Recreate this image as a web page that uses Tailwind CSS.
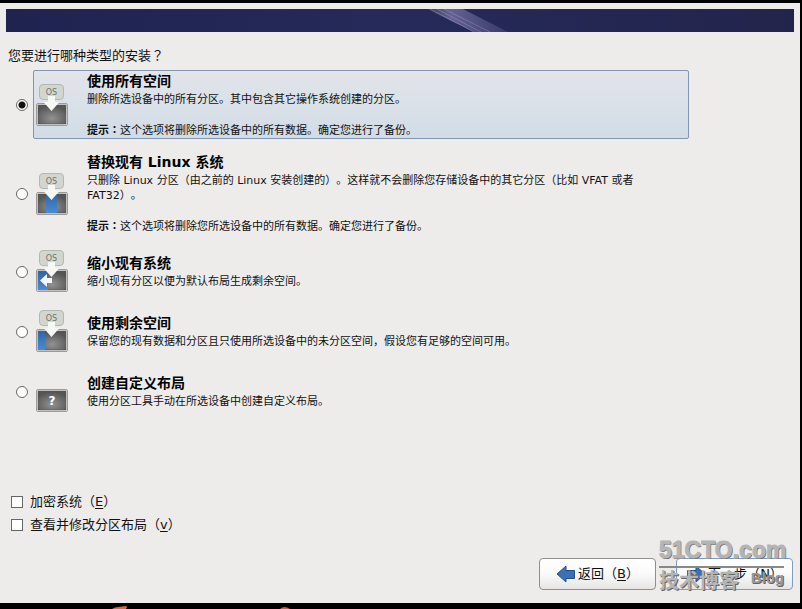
<!DOCTYPE html>
<html lang="zh-CN">
<head>
    <meta charset="UTF-8">
    <meta name="viewport" content="width=device-width, initial-scale=1.0">
    <title>安装类型</title>
    <script src="https://cdn.jsdelivr.net/npm/@tailwindcss/browser@4"></script>
</head>
<body class="relative flex flex-col min-h-screen bg-black pt-[3px] pr-0.5 pb-1.5 overflow-hidden font-['DejaVu_Sans','Noto_Sans_CJK_SC',sans-serif] text-[#111] [text-spacing-trim:space-all]">

    <!-- Shared icon parts -->
    <svg class="absolute size-0" aria-hidden="true">
        <defs>
            <radialGradient id="disk" cx="50%" cy="70%" r="65%">
                <stop offset="0" stop-color="#929292"/>
                <stop offset="1" stop-color="#555"/>
            </radialGradient>
            <linearGradient id="blue" x1="0" y1="0" x2="0" y2="1">
                <stop offset="0" stop-color="#2f67a6"/>
                <stop offset="1" stop-color="#4a8bd0"/>
            </linearGradient>
            <symbol id="screen" viewBox="0 0 33 44">
                <rect x="0.5" y="20.5" width="31" height="22" rx="1.5" fill="#fafafa" stroke="#9b9b99"/>
                <rect x="2" y="22" width="28" height="19" fill="url(#disk)" stroke="#555" stroke-width="0.7"/>
            </symbol>
            <symbol id="os" viewBox="0 0 33 44">
                <rect x="3.5" y="1.5" width="24" height="15" rx="3.5" fill="#d2d6cf" stroke="#b3b8b0"/>
                <text x="15.5" y="12" text-anchor="middle" font-size="8" fill="#6f756c" font-family="DejaVu Sans">OS</text>
                <path d="M12 13h7v6h4.5l-8 9-8-9H12z" fill="#f6f8f5"/>
            </symbol>
        </defs>
    </svg>

    <div class="flex-1 flex flex-col bg-[#edeceb] px-1.5 pt-1.5">
        <!-- Banner -->
        <header class="h-[23px] flex justify-center bg-linear-to-r from-[#1e2350] via-[#262a5a] to-[#22244b]">
            <svg class="h-full w-full" viewBox="0 0 788 23" preserveAspectRatio="none">
                <defs>
                    <linearGradient id="glow">
                        <stop offset="0" stop-color="#8f88b8" stop-opacity="0.15"/>
                        <stop offset="0.3" stop-color="#7f7aae" stop-opacity="0.7"/>
                        <stop offset="1" stop-color="#6a669c" stop-opacity="0.3"/>
                    </linearGradient>
                </defs>
                <path d="M421 0h36l45 23h-34z" fill="url(#glow)"/>
                <path d="M424 0l44 23M431 0l44 23M438 0l46 23" stroke="#a7a0c8" stroke-opacity="0.5" stroke-width="0.8" fill="none"/>
            </svg>
        </header>

        <h1 class="mt-3.5 pl-0.5 text-[13px] leading-[18px]">您要进行哪种类型的安装<span lang="ja" class="font-['Noto_Sans_CJK_TC']">？</span></h1>

        <!-- Install types -->
        <div class="mt-[5px] ml-2.5 max-w-[673px] flex flex-col gap-3">
            <label class="flex items-center gap-[5px]">
                <input type="radio" name="type" checked class="appearance-none shrink-0 size-3 rounded-full border border-[#666] bg-white checked:bg-[radial-gradient(circle,#111_0_3px,#fff_4px)]">
                <span class="flex-1 flex items-center gap-[18px] pl-0.5 pr-9 pt-px rounded-xs border border-[#8296b0] bg-linear-to-b from-[#e2e5ea] to-[#d2dce6]">
                    <svg class="w-[33px] h-11 shrink-0" viewBox="0 0 33 44"><use href="#screen"/><use href="#os"/></svg>
                    <span class="flex-1 text-[11px] leading-[15px]">
                        <b class="block mb-0.5 text-sm leading-[18px] text-black">使用所有空间</b>
                        <span class="block">删除所选设备中的所有分区。其中包含其它操作系统创建的分区。</span>
                        <span class="block mt-[15px]"><b>提示<span lang="ja" class="font-['Noto_Sans_CJK_JP']">：</span></b>这个选项将删除所选设备中的所有数据。确定您进行了备份。</span>
                    </span>
                </span>
            </label>

            <label class="flex items-center gap-[5px]">
                <input type="radio" name="type" class="appearance-none shrink-0 size-3 rounded-full border border-[#666] bg-white checked:bg-[radial-gradient(circle,#111_0_3px,#fff_4px)]">
                <span class="flex-1 flex items-center gap-[18px] pl-0.5 pr-9 py-px border border-transparent">
                    <svg class="w-[33px] h-11 shrink-0" viewBox="0 0 33 44">
                        <use href="#screen"/>
                        <rect x="10" y="22" width="11" height="19" fill="url(#blue)"/>
                        <use href="#os"/>
                    </svg>
                    <span class="flex-1 text-[11px] leading-[15px]">
                        <b class="block mb-0.5 text-sm leading-[18px] text-black">替换现有 Linux 系统</b>
                        <span class="block">只删除 Linux 分区（由之前的 Linux 安装创建的）。这样就不会删除您存储设备中的其它分区（比如 VFAT 或者 FAT32）。</span>
                        <span class="block mt-[15px]"><b>提示<span lang="ja" class="font-['Noto_Sans_CJK_JP']">：</span></b>这个选项将删除您所选设备中的所有数据。确定您进行了备份。</span>
                    </span>
                </span>
            </label>

            <label class="flex items-center gap-[5px]">
                <input type="radio" name="type" class="appearance-none shrink-0 size-3 rounded-full border border-[#666] bg-white checked:bg-[radial-gradient(circle,#111_0_3px,#fff_4px)]">
                <span class="flex-1 flex items-center gap-[18px] min-h-12 pl-0.5 pr-9 pb-0.5 border border-transparent">
                    <svg class="w-[33px] h-11 shrink-0" viewBox="0 0 33 44">
                        <use href="#screen"/>
                        <rect x="2" y="22" width="10" height="19" fill="url(#blue)"/>
                        <use href="#os"/>
                        <path d="M4 31.500l7-6.500v4h5v5h-5v4z" fill="#f6f8f5"/>
                    </svg>
                    <span class="flex-1 text-[11px] leading-[15px]">
                        <b class="block mb-0.5 text-sm leading-[18px] text-black">缩小现有系统</b>
                        <span class="block">缩小现有分区以便为默认布局生成剩余空间。</span>
                    </span>
                </span>
            </label>

            <label class="flex items-center gap-[5px]">
                <input type="radio" name="type" class="appearance-none shrink-0 size-3 rounded-full border border-[#666] bg-white checked:bg-[radial-gradient(circle,#111_0_3px,#fff_4px)]">
                <span class="flex-1 flex items-center gap-[18px] min-h-12 pl-0.5 pr-9 pb-0.5 border border-transparent">
                    <svg class="w-[33px] h-11 shrink-0" viewBox="0 0 33 44">
                        <use href="#screen"/>
                        <rect x="2" y="22" width="7" height="19" fill="url(#blue)"/>
                        <use href="#os"/>
                    </svg>
                    <span class="flex-1 text-[11px] leading-[15px]">
                        <b class="block mb-0.5 text-sm leading-[18px] text-black">使用剩余空间</b>
                        <span class="block">保留您的现有数据和分区且只使用所选设备中的未分区空间，假设您有足够的空间可用。</span>
                    </span>
                </span>
            </label>

            <label class="flex items-center gap-[5px]">
                <input type="radio" name="type" class="appearance-none shrink-0 size-3 rounded-full border border-[#666] bg-white checked:bg-[radial-gradient(circle,#111_0_3px,#fff_4px)]">
                <span class="flex-1 flex items-center gap-[18px] min-h-12 pl-0.5 pr-9 pb-0.5 border border-transparent">
                    <svg class="w-[33px] h-11 shrink-0" viewBox="0 0 33 44">
                        <use href="#screen"/>
                        <text x="16" y="36" text-anchor="middle" font-size="12" font-weight="bold" fill="#fff" font-family="DejaVu Sans">?</text>
                    </svg>
                    <span class="flex-1 text-[11px] leading-[15px]">
                        <b class="block mb-0.5 text-sm leading-[18px] text-black">创建自定义布局</b>
                        <span class="block">使用分区工具手动在所选设备中创建自定义布局。</span>
                    </span>
                </span>
            </label>
        </div>

        <!-- Options and navigation -->
        <div class="mt-auto pl-[5px] flex flex-col gap-[5px] text-[13px] leading-[18px]">
            <label class="flex items-center gap-[7px]">
                <input type="checkbox" class="appearance-none size-3 border border-[#666] bg-white checked:bg-[#444]">
                <span>加密系统（<u class="underline-offset-2">E</u>）</span>
            </label>
            <label class="flex items-center gap-[7px]">
                <input type="checkbox" class="appearance-none size-3 border border-[#666] bg-white checked:bg-[#444]">
                <span>查看并修改分区布局（<u class="underline-offset-2">v</u>）</span>
            </label>
        </div>

        <div class="relative mt-6 mb-[13px] pr-px flex justify-end gap-5 text-[13px] leading-[18px]">
            <button class="w-[117px] h-8 flex items-center justify-center gap-0.5 rounded-sm border border-[#8f8f8d] bg-linear-to-b from-white via-[#fafafa] to-[#e6e5e4]">
                <svg class="w-5 h-[18px]" viewBox="0 0 20 18"><path d="M1 9l9-8v4.500h8.500v8H10V17z" fill="#3c70b4" stroke="#234f8b"/></svg>
                <span>返回（<u class="underline-offset-2">B</u>）</span>
            </button>
            <button class="w-[117px] h-8 flex items-center justify-center gap-0.5 rounded-sm border border-[#7f9dc2] bg-linear-to-b from-white via-[#fafafa] to-[#e6e5e4]">
                <svg class="w-5 h-[18px]" viewBox="0 0 20 18"><path d="M19 9l-9-8v4.500H1.500v8H10V17z" fill="#3c70b4" stroke="#234f8b"/></svg>
                <span>下一步（<u class="underline-offset-2">N</u>）</span>
            </button>

            <!-- Watermark -->
            <div class="absolute right-2.5 -top-6 w-[125px] pointer-events-none font-bold text-[#b4b4b4] [text-shadow:1px_1px_0_#666]">
                <div class="font-['Liberation_Sans'] text-[23px] leading-8 [-webkit-text-stroke:1px_#b4b4b4]">51CTO.com</div>
                <div class="h-0.5 bg-[#888]"></div>
                <div class="flex justify-between items-start">
                    <span class="text-[20px] leading-6 font-['Noto_Sans_CJK_SC']">技术博客</span>
                    <span class="text-[15px] leading-5 font-['Liberation_Sans'] text-[#999]">Blog</span>
                </div>
            </div>
        </div>
    </div>

    <svg class="absolute bottom-0 left-[112px] w-[180px] h-[3px]" viewBox="0 0 180 3">
        <path d="M0 3l3-1.500L14 0l1 1-1 2z" fill="#e0683c"/>
        <path d="M168 3q4-4 10 0z" fill="#d8583a"/>
    </svg>

</body>
</html>
